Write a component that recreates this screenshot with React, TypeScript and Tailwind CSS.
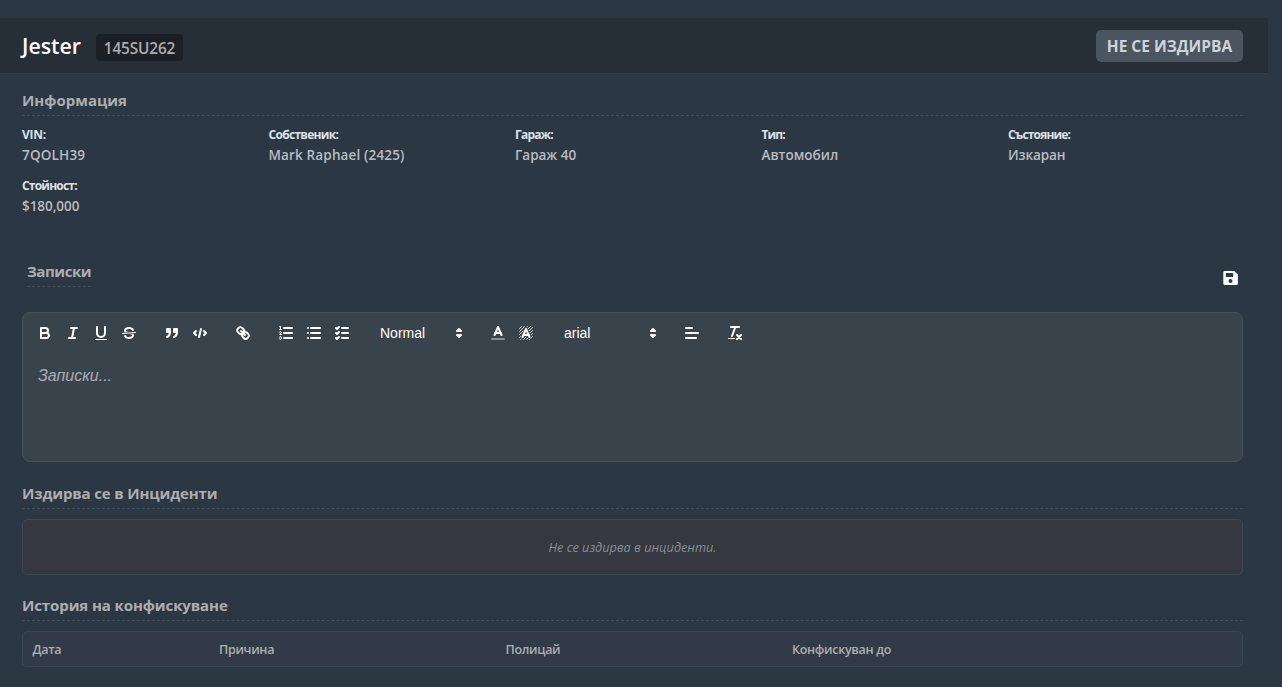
import type { ReactNode } from "react";

const fields = [
  { label: "VIN:", value: "7QOLH39", labelClass: "tracking-[-0.3px]", valueClass: "tracking-[0.2px]" },
  { label: "Собственик:", value: "Mark Raphael (2425)", labelClass: "tracking-[-0.7px]", valueClass: "tracking-[0.15px]" },
  { label: "Гараж:", value: "Гараж 40", labelClass: "tracking-[-0.8px]", valueClass: "tracking-normal" },
  { label: "Тип:", value: "Автомобил", labelClass: "tracking-[-0.9px]", valueClass: "tracking-normal" },
  { label: "Състояние:", value: "Изкаран", labelClass: "tracking-[-0.85px]", valueClass: "tracking-[-0.1px]" },
  { label: "Стойност:", value: "$180,000", labelClass: "tracking-[-0.8px]", valueClass: "tracking-[-0.05px]" },
];

function SectionTitle({ children, className = "" }: { children: ReactNode; className?: string }) {
  return (
    <h2 className={`h-[25px] border-b border-dashed border-[#434f5a] text-[15px] leading-[18px] font-bold text-[#aeaeb0] ${className}`}>
      {children}
    </h2>
  );
}

function Tool({ children }: { children: ReactNode }) {
  return (
    <button className="flex h-6 w-7 items-center justify-center">
      <svg
        viewBox="0 0 18 18"
        className="size-[18px] fill-none stroke-white stroke-2 [stroke-linecap:round] [stroke-linejoin:round]"
      >
        {children}
      </svg>
    </button>
  );
}

function Picker({ label, className }: { label: string; className: string }) {
  return (
    <div className={`flex h-6 items-center justify-between pl-[9px] pr-px font-['Liberation_Sans',sans-serif] text-[14px] font-medium text-white ${className}`}>
      <span>{label}</span>
      <svg viewBox="0 0 18 18" className="size-[18px] fill-none stroke-white stroke-2 [stroke-linecap:round] [stroke-linejoin:round]">
        <polygon points="7 11 9 13 11 11 7 11" />
        <polygon points="7 7 9 5 11 7 7 7" />
      </svg>
    </div>
  );
}

function Toolbar() {
  return (
    <div className="flex gap-[15px] p-2">
      <div className="flex">
        <Tool>
          <path d="M5,4H9.5A2.5,2.5,0,0,1,12,6.5v0A2.5,2.5,0,0,1,9.5,9H5V4Z" />
          <path d="M5,9h5.5A2.5,2.5,0,0,1,13,11.5v0A2.5,2.5,0,0,1,10.5,14H5V9Z" />
        </Tool>
        <Tool>
          <path d="M7,4H13M5,14H11M8,14L10,4" />
        </Tool>
        <Tool>
          <path d="M5,3V9a4.012,4.012,0,0,0,4,4H9a4.012,4.012,0,0,0,4-4V3" />
          <rect className="fill-white stroke-none" height="1" rx="0.5" width="12" x="3" y="15" />
        </Tool>
        <Tool>
          <path className="stroke-1" d="M15.5,8.5L2.5,9.5" />
          <path className="fill-white stroke-none" d="M9.007,8C6.542,7.791,6,7.519,6,6.5,6,5.792,7.283,5,9,5c1.571,0,2.765.679,2.969,1.309a1,1,0,0,0,1.9-.617C13.356,4.106,11.354,3,9,3,6.2,3,4,4.538,4,6.5a3.2,3.2,0,0,0,.5,1.843Z" />
          <path className="fill-white stroke-none" d="M8.984,10C11.457,10.208,12,10.479,12,11.5c0,.708-1.283,1.5-3,1.5-1.571,0-2.765-.679-2.969-1.309a1,1,0,1,0-1.9.617C4.644,13.894,6.646,15,9,15c2.8,0,5-1.538,5-3.5a3.2,3.2,0,0,0-.5-1.843Z" />
        </Tool>
      </div>
      <div className="flex">
        <Tool>
          <rect className="fill-white" height="3" width="3" x="4" y="5" />
          <rect className="fill-white" height="3" width="3" x="11" y="5" />
          <path className="fill-white" d="M7,8c0,4.031-3,5-3,5" />
          <path className="fill-white" d="M14,8c0,4.031-3,5-3,5" />
        </Tool>
        <Tool>
          <polyline points="5 7 3 9 5 11" />
          <polyline points="13 7 15 9 13 11" />
          <path d="M10,5L8,13" />
        </Tool>
      </div>
      <div className="flex">
        <Tool>
          <path d="M7,7L11,11" />
          <path d="M8.9,4.577a3.476,3.476,0,0,1,.36,4.679A3.476,3.476,0,0,1,4.577,8.9C3.185,7.5,2.035,6.4,4.217,4.217S7.5,3.185,8.9,4.577Z" />
          <path d="M13.423,9.1a3.476,3.476,0,0,0-4.679-.36,3.476,3.476,0,0,0,.36,4.679c1.392,1.392,2.5,2.542,4.679.36S14.815,10.5,13.423,9.1Z" />
        </Tool>
      </div>
      <div className="flex">
        <Tool>
          <path d="M7,4H15M7,9H15M7,14H15" />
          <path className="stroke-1" d="M2.5,5.5H4.5" />
          <path className="fill-white stroke-none" d="M3.5,6A0.5,0.5,0,0,1,3,5.5V3.085l-0.276.138A0.5,0.5,0,0,1,2.053,3c-0.124-.247-0.023-0.324.224-0.447l1-.5A0.5,0.5,0,0,1,4,2.5v3A0.5,0.5,0,0,1,3.5,6Z" />
          <path className="stroke-1" d="M4.5,10.5h-2c0-.234,1.85-1.076,1.85-2.234A0.959,0.959,0,0,0,2.5,8.156" />
          <path className="stroke-1" d="M2.5,14.846a0.959,0.959,0,0,0,1.85-.109A0.7,0.7,0,0,0,3.75,14a0.688,0.688,0,0,0,.6-0.736,0.959,0.959,0,0,0-1.85-.109" />
        </Tool>
        <Tool>
          <path d="M6,4H15M6,9H15M6,14H15M3,4H3M3,9H3M3,14H3" />
        </Tool>
        <Tool>
          <path d="M9,4H15M9,9H15M9,14H15" />
          <polyline points="3 4 4 5 6 3" />
          <polyline points="3 9 4 10 6 8" />
          <polyline points="3 14 4 15 6 13" />
        </Tool>
      </div>
      <Picker label="Normal" className="w-[98px]" />
      <div className="flex">
        <Tool>
          <path className="opacity-40" d="M3,15H15" />
          <polyline points="5.5 11 9 3 12.5 11" />
          <path d="M11.63,9H6.38" />
        </Tool>
        <Tool>
          <path
            className="stroke-[0.8]"
            d="M2.5,4.5L4.5,2.5M2.5,7.5L7.5,2.5M2.5,10.5L10.5,2.5M2.5,13.5L13.5,2.5M3.5,15.5L15.5,3.5M6.5,15.5L15.5,6.5M9.5,15.5L15.5,9.5M12.5,15.5L15.5,12.5"
          />
          <path className="stroke-[#39434c] stroke-[3.6]" d="M5.5,13L9,5L12.5,13M11.63,11H6.38" />
          <polyline points="5.5 13 9 5 12.5 13" />
          <path d="M11.63,11H6.38" />
        </Tool>
      </div>
      <Picker label="arial" className="w-[108px]" />
      <Tool>
        <path d="M3,9H15M3,14H13M3,4H9" />
      </Tool>
      <Tool>
        <path d="M5,3H13M6,12L9.35,3M11,11L15,15M15,11L11,15" />
        <rect className="fill-white stroke-none" height="1" rx="0.5" width="7" x="2" y="14" />
      </Tool>
    </div>
  );
}

export default function App() {
  return (
    <div className="h-[687px] w-[1282px] overflow-hidden bg-[#2b3743] pt-[18px] font-['Open_Sans','Noto_Sans',sans-serif]">
      <header className="flex h-14 w-[1268px] items-center justify-between border-b border-[#323d48] bg-[#262e37] pr-[25px] pl-[22px]">
        <div className="flex items-center">
          <h1 className="w-[74px] text-[21.3px] leading-7 font-semibold text-white">Jester</h1>
          <span className="mt-1 flex h-[27px] w-[87px] items-center justify-center rounded bg-[#1b2026] pt-px text-[15.3px] font-semibold tracking-[-0.1px] text-[#aeaeb0]">
            145SU262
          </span>
        </div>
        <span className="flex h-8 w-[147px] items-center justify-center rounded-[5px] bg-[#4a555f] pt-[2px] text-[15.5px] font-bold whitespace-nowrap text-[#ced4da]">
          НЕ СЕ ИЗДИРВА
        </span>
      </header>

      <main className="flex w-[1243px] flex-col pt-[17px] pl-[22px]">
        <SectionTitle>Информация</SectionTitle>
        <dl className="mt-[9px] grid grid-cols-[246.5px_246.5px_246.5px_246.5px_1fr] gap-y-[11px]">
          {fields.map((f) => (
            <div key={f.label} className="h-10">
              <dt className={`h-5 text-[12px] leading-5 font-bold text-[#dee2e6] ${f.labelClass}`}>{f.label}</dt>
              <dd className={`h-5 text-[13.5px] leading-5 font-semibold text-[#b9bdc2] ${f.valueClass}`}>{f.value}</dd>
            </div>
          ))}
        </dl>

        <div className="mt-[46px] flex h-[50px] items-start justify-between pl-[5px]">
          <SectionTitle className="tracking-[-0.42px]">Записки</SectionTitle>
          <button aria-label="Запази" className="mt-2 mr-[4px]">
            <svg viewBox="0 0 16 16" className="size-4 fill-white">
              <path fillRule="evenodd" d="M1.7 1H11.3L14.9 4.6V13.4A1.7 1.7 0 0 1 13.3 15H1.7A1.4 1.4 0 0 1 .3 13.6V2.4A1.4 1.4 0 0 1 1.7 1ZM3.5 3A.7.7 0 0 0 2.8 3.7V6.2A.7.7 0 0 0 3.5 6.9H9.5A.7.7 0 0 0 10.2 6.2V3.7A.7.7 0 0 0 9.5 3ZM7.5 9A2 2 0 1 0 7.5 13A2 2 0 1 0 7.5 9Z" />
            </svg>
          </button>
        </div>

        <section className="h-[150px] rounded-lg border border-[#46525b] bg-[#39434c]">
          <Toolbar />
          <p className="px-[15px] pt-[11px] font-['Liberation_Sans',sans-serif] text-[16px] leading-[23px] text-[#a9aeb3] italic">Записки...</p>
        </section>

        <div className="mt-[22px]">
          <SectionTitle className="tracking-[-0.14px]">Издирва се в Инциденти</SectionTitle>
          <div className="mt-[10px] flex h-14 items-center justify-center rounded-[5px] border border-[#3d4853] bg-[#353741] pt-px text-[12.7px] text-[#868e96] italic">
            Не се издирва в инциденти.
          </div>
        </div>

        <div className="mt-[21px]">
          <SectionTitle className="tracking-[-0.1px]">История на конфискуване</SectionTitle>
          <div className="mt-[10px] grid h-9 grid-cols-[186.5px_286.5px_286.5px_1fr] items-center rounded-[5px] border border-[#3a4651] bg-[#303b47] pt-[2px] pl-[9.5px] text-[12.5px] font-semibold tracking-[-0.3px] text-[#aeaeb0]">
            <span>Дата</span>
            <span>Причина</span>
            <span>Полицай</span>
            <span>Конфискуван до</span>
          </div>
        </div>
      </main>
    </div>
  );
}
